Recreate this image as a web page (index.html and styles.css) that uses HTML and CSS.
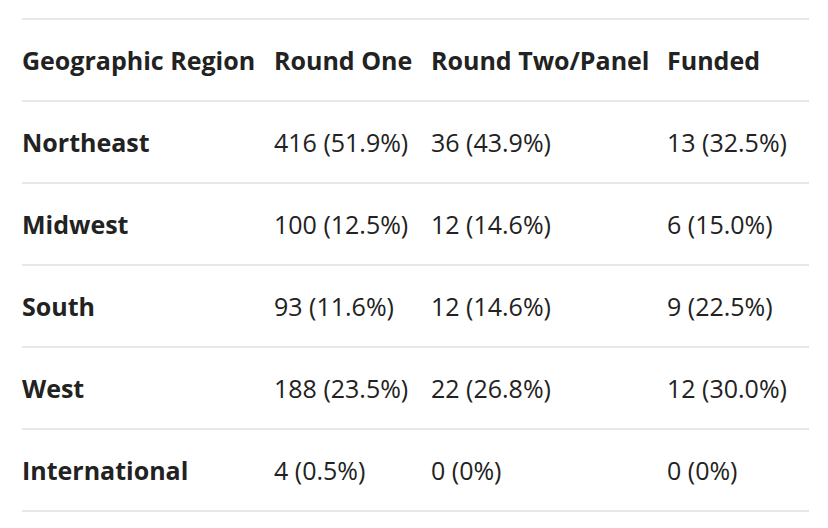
FILE: index.html
```html
<!DOCTYPE html>
<html lang="en">
<head>
<meta charset="utf-8">
<title>Applications by Geographic Region</title>
<link rel="stylesheet" href="styles.css">
</head>
<body>
<div class="wrap">
  <table class="region-table">
    <colgroup>
      <col class="c1"><col class="c2"><col class="c3"><col class="c4">
    </colgroup>
    <thead>
      <tr>
        <th>Geographic Region</th>
        <th>Round One</th>
        <th>Round Two/Panel</th>
        <th>Funded</th>
      </tr>
    </thead>
    <tbody>
      <tr><th>Northeast</th><td>416 (51.9%)</td><td>36 (43.9%)</td><td>13 (32.5%)</td></tr>
      <tr><th>Midwest</th><td>100 (12.5%)</td><td>12 (14.6%)</td><td>6 (15.0%)</td></tr>
      <tr><th>South</th><td>93 (11.6%)</td><td>12 (14.6%)</td><td>9 (22.5%)</td></tr>
      <tr><th>West</th><td>188 (23.5%)</td><td>22 (26.8%)</td><td>12 (30.0%)</td></tr>
      <tr><th>International</th><td>4 (0.5%)</td><td>0 (0%)</td><td>0 (0%)</td></tr>
    </tbody>
  </table>
</div>
</body>
</html>
```

FILE: styles.css
```css
html, body {
  margin: 0;
  padding: 0;
  background: #ffffff;
}
.wrap {
  padding: 18px 19px 0 22px;
}
.region-table {
  width: 787px;
  table-layout: fixed;
  border-collapse: separate;
  border-spacing: 0;
  font-family: "Open Sans", "Noto Sans", sans-serif;
  font-size: 25px;
  color: #222222;
}
.c1 { width: 252px; }
.c2 { width: 157px; }
.c3 { width: 236px; }
.c4 { width: 142px; }
.region-table th,
.region-table td {
  padding: 24px 0;
  line-height: 32px;
  text-align: left;
  vertical-align: middle;
  white-space: nowrap;
  border-bottom: 2px solid #e7e7e7;
}
.region-table th {
  font-weight: 700;
}
.region-table td {
  font-weight: 400;
}
.region-table thead th {
  border-top: 2px solid #e7e7e7;
}
```
